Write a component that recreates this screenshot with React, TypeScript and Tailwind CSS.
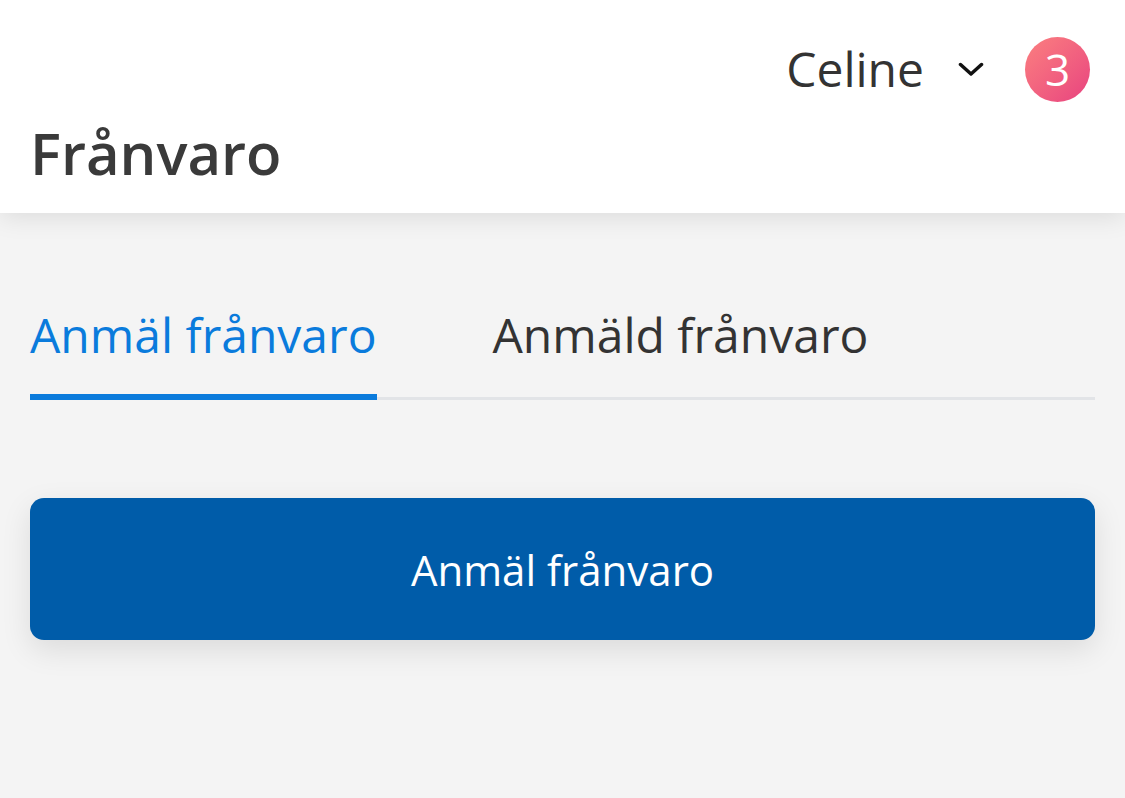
import React, { useState } from 'react';

export default function App() {
  const [tab, setTab] = useState(0);
  const tabs = ['Anmäl frånvaro', 'Anmäld frånvaro'];

  return (
    <div className="min-h-screen bg-[#f4f4f4]" style={{ fontFamily: '"Open Sans", sans-serif' }}>
      {/* Header */}
      <header className="relative z-10 h-[213px] bg-white px-[30px] shadow-[0_4px_24px_rgba(0,0,0,0.10)]">
        <div className="flex h-[140px] items-start justify-end pt-[36px]">
          <div className="flex items-center">
            <span className="text-[48px] leading-[66px] text-[#333]">Celine</span>
            <svg className="ml-[34px] h-[14px] w-[26px]" viewBox="0 0 26 14" fill="none" stroke="#111" strokeWidth={3.5} strokeLinecap="round" strokeLinejoin="round">
              <path d="M2.5 2.5l10.5 9.5 10.5-9.5" />
            </svg>
            <div className="ml-[41px] mr-[5px] flex h-[65px] w-[65px] items-center justify-center rounded-full bg-gradient-to-br from-[#fb7f7f] to-[#e8417f] text-[44px] leading-none text-white">
              3
            </div>
          </div>
        </div>
        <h1 className="-mt-[27px] text-[58px] font-semibold leading-[80px] text-[#3a3a3a]">Frånvaro</h1>
      </header>

      {/* Tabs */}
      <div className="px-[30px] pt-[89px]">
        <div className="flex border-b-[3px] border-[#e2e4e7]">
          {tabs.map((t, i) => (
            <button
              key={t}
              onClick={() => setTab(i)}
              className={
                'relative -mb-[3px] pb-[26px] text-[48px] leading-[66px] ' +
                (i === 0 ? 'mr-[116px] ' : '') +
                (tab === i ? 'border-b-[6px] border-[#0a7bdc] text-[#0a7bdc]' : 'border-b-[6px] border-transparent text-[#333]')
              }
            >
              {t}
            </button>
          ))}
        </div>

        {/* Action */}
        <button className="mt-[98px] flex h-[142px] w-full items-center justify-center rounded-[14px] bg-[#005ca9] text-[42px] text-white shadow-[0_10px_30px_rgba(0,0,0,0.10)]">
          Anmäl frånvaro
        </button>
      </div>
    </div>
  );
}
